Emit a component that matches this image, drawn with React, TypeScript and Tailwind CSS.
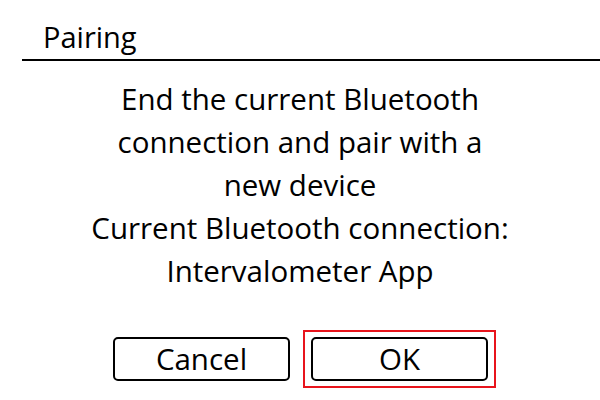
export default function App() {
  const font = { fontFamily: '"Open Sans", "Noto Sans", sans-serif' }
  return (
    <div className="h-[400px] w-[600px] overflow-hidden bg-white text-black" style={font}>
      <div className="pt-[20px] pl-[22px]">
        <h1 className="pl-[21px] text-[29px] leading-[34px] font-normal">Pairing</h1>
        <div className="mt-[5px] h-[2px] bg-black" />
      </div>

      <div className="mt-[16px] text-center text-[29.5px] leading-[43px]">
        <p>End the current Bluetooth</p>
        <p>connection and pair with a</p>
        <p>new device</p>
        <p>Current Bluetooth connection:</p>
        <p>Intervalometer App</p>
      </div>

      <div className="mt-[38px] flex items-center pl-[113px]">
        <button className="flex h-[44px] w-[177px] items-center justify-center rounded-[5px] border-2 border-black text-[29.5px] leading-none">
          Cancel
        </button>
        <div className="ml-[13px] border-2 border-[#e8141c] px-[6px] py-[5px]">
          <button className="flex h-[44px] w-[177px] items-center justify-center rounded-[5px] border-2 border-black text-[29.5px] leading-none">
            OK
          </button>
        </div>
      </div>
    </div>
  )
}
